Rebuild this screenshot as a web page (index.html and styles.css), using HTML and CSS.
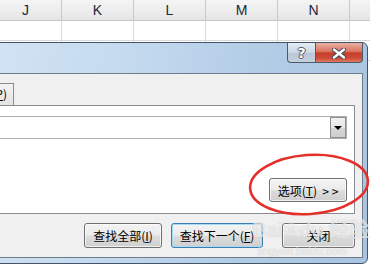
FILE: index.html
```html
<!DOCTYPE html>
<html>
  <head>
    <title>查找和替换</title>
    <link rel="stylesheet" href="styles.css">
  </head>

  <body>
    <div class="col-head">
      <span>J</span><span>K</span><span>L</span><span>M</span><span>N</span><span></span>
    </div>
    <div class="row">
      <span></span><span></span><span></span><span></span><span></span><span></span>
    </div>
    <div class="row">
      <span></span><span></span><span></span><span></span><span></span><span></span>
    </div>

    <div class="dialog">
      <div class="titlebar">
        <div class="caption-btns">
          <div class="cap help">?</div>
          <div class="cap close">
            <svg width="14" height="11" viewBox="0 0 14 11">
              <path d="M2 1.5 L12 9.5 M12 1.5 L2 9.5" stroke="#3d4a58" stroke-width="4.4" stroke-linecap="round" />
              <path d="M2 1.5 L12 9.5 M12 1.5 L2 9.5" stroke="#fff" stroke-width="2.4" stroke-linecap="round" />
            </svg>
          </div>
        </div>
      </div>

      <div class="client">
        <div class="tabs">
          <div class="tab active"></div>
          <div class="tab">替换(<u>P</u>)</div>
        </div>
        <div class="panel">
          <div class="combo">
            <div class="drop"><i></i></div>
          </div>
          <div class="btn options">选项(<u>T</u>)&nbsp; &gt; &gt;</div>
        </div>
        <div class="actions">
          <div class="btn find-all">查找全部(<u>I</u>)</div>
          <div class="btn find-next">查找下一个(<u>F</u>)</div>
          <div class="btn close-btn">关闭</div>
        </div>
      </div>
    </div>

    <!-- red mark drawn over the screenshot -->
    <svg class="mark" width="370" height="266">
      <ellipse cx="309" cy="184.5" rx="59" ry="29.5" transform="rotate(-4 309 184.5)" fill="none" stroke="#e3302b" stroke-width="2.6" />
    </svg>

    <div class="watermark">
      <div class="wm-big">Bai<span class="paw">❀</span>du 经验</div>
      <div class="wm-small">jingyan.baidu.com</div>
    </div>
  </body>
</html>
```

FILE: styles.css
```css
/* page */
* {
  box-sizing: border-box;
}

body {
  margin: 0;
  width: 370px;
  height: 266px;
  overflow: hidden;
  position: relative;
  background-color: #fff;
  font-family: "Noto Sans CJK SC", "Liberation Sans", sans-serif;
}

/* spreadsheet behind the dialog */
.col-head {
  display: flex;
  height: 21px;
  margin-left: -10px;
  background: linear-gradient(#f5f5f5, #e5e5e5);
  border-bottom: 1px solid #c6c6c6;
}

.col-head span {
  flex: 0 0 72px;
  border-right: 1px solid #c9c9c9;
  text-align: center;
  font: 14px/20px "Liberation Sans", Arial, sans-serif;
  color: #1c2838;
}

.row {
  display: flex;
  height: 20px;
  margin-left: -10px;
  border-bottom: 1px solid #d8d9da;
}

.row span {
  flex: 0 0 72px;
  border-right: 1px solid #d8d9da;
}

/* dialog window */
.dialog {
  position: absolute;
  left: -120px;
  top: 42px;
  width: 488px;
  height: 222px;
  border: 1px solid #43536a;
  border-radius: 6px;
  padding: 0 4px 5px 4px;
  display: flex;
  flex-direction: column;
  background: linear-gradient(100deg, #dce9f7 0%, #c6dbef 45%, #b3cde7 72%, #a9c4df 100%);
}

.titlebar {
  height: 30px;
  display: flex;
  justify-content: flex-end;
  align-items: flex-start;
}

.caption-btns {
  display: flex;
}

.cap {
  height: 20px;
  border: 1px solid #4b5a6c;
  border-top: none;
  display: flex;
  align-items: center;
  justify-content: center;
}

.help {
  width: 28px;
  border-right: none;
  border-radius: 0 0 0 4px;
  background: linear-gradient(#e4ecf4, #ccd8e4 50%, #b8c6d6 51%, #c3d1df);
  color: #fff;
  font: bold 14px/1 "DejaVu Sans", sans-serif;
  text-shadow: 1px 0 0 #4a5666, -1px 0 0 #4a5666, 0 1px 0 #4a5666, 0 -1px 0 #4a5666;
}

.close {
  width: 48px;
  border-radius: 0 0 4px 0;
  background: linear-gradient(#eab0a3, #d8735f 45%, #c63f2a 52%, #cd4b35 80%, #e07a62);
}

.close svg {
  display: block;
  margin-top: 1px;
}

.client {
  height: 185px;
  border: 1px solid #6e7c8b;
  background-color: #f0f0f0;
  display: flex;
  flex-direction: column;
}

/* tabs */
.tabs {
  display: flex;
  margin-top: 9px;
  padding-left: 4px;
  height: 22px;
  align-items: flex-end;
}

.tab {
  height: 22px;
  width: 62px;
  border: 1px solid #898c95;
  border-bottom: none;
  background: linear-gradient(#f3f3f3, #e3e3e3);
  font-size: 12px;
  line-height: 20px;
  text-align: right;
  padding-right: 6px;
}

.tab.active {
  height: 24px;
  margin-bottom: -1px;
  background-color: #fff;
  background-image: none;
  position: relative;
}

/* tab page */
.panel {
  height: 109px;
  margin-right: 7px;
  border: 1px solid #898c95;
  background-color: #fff;
  display: flex;
  flex-direction: column;
  align-items: flex-end;
}

.combo {
  align-self: stretch;
  height: 23px;
  margin: 10px 7px 0 0;
  border: 1px solid #abadb3;
  display: flex;
  justify-content: flex-end;
}

.drop {
  width: 16px;
  height: 21px;
  border: 1px solid #8e8f8f;
  background: linear-gradient(#f2f2f2, #e6e6e6 50%, #d8d8d8 51%, #cdcdcd);
  display: flex;
  align-items: center;
  justify-content: center;
}

.drop i {
  border-left: 4px solid transparent;
  border-right: 4px solid transparent;
  border-top: 4px solid #000;
}

/* buttons */
.btn {
  height: 24px;
  border: 1px solid #707070;
  border-radius: 3px;
  background: linear-gradient(#f3f3f3, #ebebeb 48%, #dddddd 52%, #cfcfcf);
  box-shadow: inset 0 0 0 1px rgba(255, 255, 255, 0.7);
  display: flex;
  align-items: center;
  justify-content: center;
  font-size: 12px;
  color: #000;
  white-space: nowrap;
}

.options {
  width: 78px;
  margin: 39px 7px 0 0;
}

.actions {
  display: flex;
  justify-content: flex-end;
  margin: 9px 7px 0 0;
}

.actions .btn {
  height: 25px;
}

.find-all {
  width: 78px;
}

.find-next {
  width: 92px;
  margin-left: 9px;
  border-color: #3c7fb1;
  box-shadow: inset 0 0 0 1px #a7dcf6;
}

.close-btn {
  width: 73px;
  margin-left: 19px;
}

/* overlays */
.mark {
  position: absolute;
  left: 0;
  top: 0;
}

.watermark {
  position: absolute;
  left: 252px;
  top: 217px;
  color: rgba(255, 255, 255, 0.6);
  text-shadow: 0 0 1px rgba(110, 110, 110, 0.35);
}

.wm-big {
  font: bold 20px/26px "Liberation Sans", "Noto Sans CJK SC", sans-serif;
}

.paw {
  font-size: 16px;
}

.wm-small {
  font: 11px/12px "Liberation Sans", sans-serif;
  padding-left: 6px;
}
```
